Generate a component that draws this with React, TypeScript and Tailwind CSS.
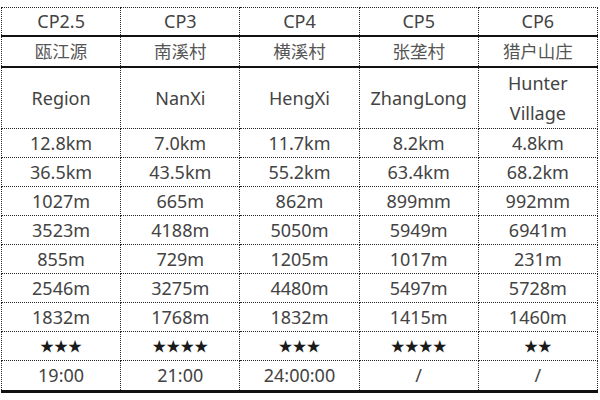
const cols = ["CP2.5", "CP3", "CP4", "CP5", "CP6"];
const cn = ["瓯江源", "南溪村", "横溪村", "张垄村", "猎户山庄"];
const en = ["Region", "NanXi", "HengXi", "ZhangLong", "Hunter Village"];

const rows: string[][] = [
  ["12.8km", "7.0km", "11.7km", "8.2km", "4.8km"],
  ["36.5km", "43.5km", "55.2km", "63.4km", "68.2km"],
  ["1027m", "665m", "862m", "899mm", "992mm"],
  ["3523m", "4188m", "5050m", "5949m", "6941m"],
  ["855m", "729m", "1205m", "1017m", "231m"],
  ["2546m", "3275m", "4480m", "5497m", "5728m"],
  ["1832m", "1768m", "1832m", "1415m", "1460m"],
  ["★★★", "★★★★", "★★★", "★★★★", "★★"],
];
const last = ["19:00", "21:00", "24:00:00", "/", "/"];

const cell = "border border-dotted border-[#222] text-center align-middle p-0";
// solid rule under a row
const rule = "border-b-2 [border-bottom-style:solid] border-b-[#111]";

export default function App() {
  return (
    <div
      className="w-[600px] h-[400px] bg-white pt-[7px] pl-px text-[#434343]"
      style={{ fontFamily: '"Noto Sans", "Noto Sans CJK SC", sans-serif' }}
    >
      <table className="w-[597px] table-fixed border-collapse text-[18px] leading-[20px]">
        <tbody>
          <tr className="h-[28px]">
            {cols.map((c) => (
              <td key={c} className={`${cell} ${rule}`}>
                {c}
              </td>
            ))}
          </tr>
          <tr className="h-[31px]">
            {cn.map((c) => (
              <td
                key={c}
                className={`${cell} ${rule} text-[#555] text-[17.5px]`}
                style={{ fontFamily: '"Noto Sans CJK SC", sans-serif' }}
              >
                {c}
              </td>
            ))}
          </tr>
          <tr className="h-[61px]">
            {en.map((c) => (
              <td key={c} className={`${cell} leading-[30px]`}>
                {c === "Hunter Village" ? (
                  <>
                    Hunter
                    <br />
                    Village
                  </>
                ) : (
                  c
                )}
              </td>
            ))}
          </tr>
          {rows.map((r, i) => (
            <tr key={i} className="h-[29px]">
              {r.map((v, j) => (
                <td key={j} className={`${cell} ${v.startsWith("★") ? "text-[#1a1a1a] text-[14px]" : ""}`}>
                  {v}
                </td>
              ))}
            </tr>
          ))}
          <tr className="h-[31px]">
            {last.map((v, j) => (
              <td key={j} className={`${cell} border-b-[3px] [border-bottom-style:solid] border-b-[#111]`}>
                {v}
              </td>
            ))}
          </tr>
        </tbody>
      </table>
    </div>
  );
}
